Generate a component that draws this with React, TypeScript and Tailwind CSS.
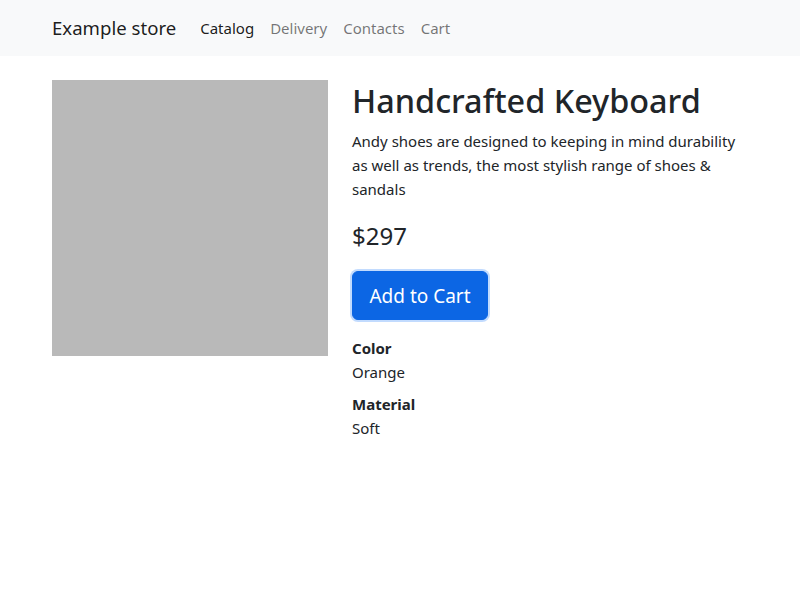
export default function App() {
  const font = { fontFamily: '"Noto Sans", "Open Sans", sans-serif' }
  return (
    <div className="min-h-screen bg-white text-[#212529] text-[15px] leading-[24px]" style={font}>
      <nav className="h-[56px] bg-[#f8f9fa]">
        <div className="mx-auto flex h-full w-[720px] items-center px-[12px]">
          <a href="#" className="mr-[16px] text-[18.6px] leading-[30px] text-black/90">
            Example store
          </a>
          <ul className="flex">
            <li>
              <a href="#" className="block px-[8px] py-[8px] text-black/90">Catalog</a>
            </li>
            <li>
              <a href="#" className="block px-[8px] py-[8px] text-black/55">Delivery</a>
            </li>
            <li>
              <a href="#" className="block px-[8px] py-[8px] text-black/55">Contacts</a>
            </li>
            <li>
              <a href="#" className="block px-[8px] py-[8px] text-black/55">Cart</a>
            </li>
          </ul>
        </div>
      </nav>

      <main className="mx-auto mt-[24px] flex w-[720px]">
        <div className="w-[300px] px-[12px]">
          <div className="h-[276px] w-[276px] bg-[#b9b9b9]" />
        </div>
        <div className="w-[420px] px-[12px]">
          <h1 className="mb-[8px] text-[32.4px] font-medium leading-[41px]">Handcrafted Keyboard</h1>
          <p className="mb-[16px]">
            Andy shoes are designed to keeping in mind durability as well as trends, the most stylish range of shoes &amp; sandals
          </p>
          <div className="mb-[16px] text-[24px] leading-[38px]">$297</div>
          <button className="h-[49px] w-[136px] rounded-[6px] border border-[#0c66e4] bg-[#0c66e4] text-[19px] leading-[30px] text-white shadow-[0_0_0_2px_rgba(13,110,253,0.25)]">
            Add to Cart
          </button>
          <dl className="mt-[16px]">
            <dt className="font-bold">Color</dt>
            <dd className="mb-[8px]">Orange</dd>
            <dt className="font-bold">Material</dt>
            <dd className="mb-[8px]">Soft</dd>
          </dl>
        </div>
      </main>
    </div>
  )
}
